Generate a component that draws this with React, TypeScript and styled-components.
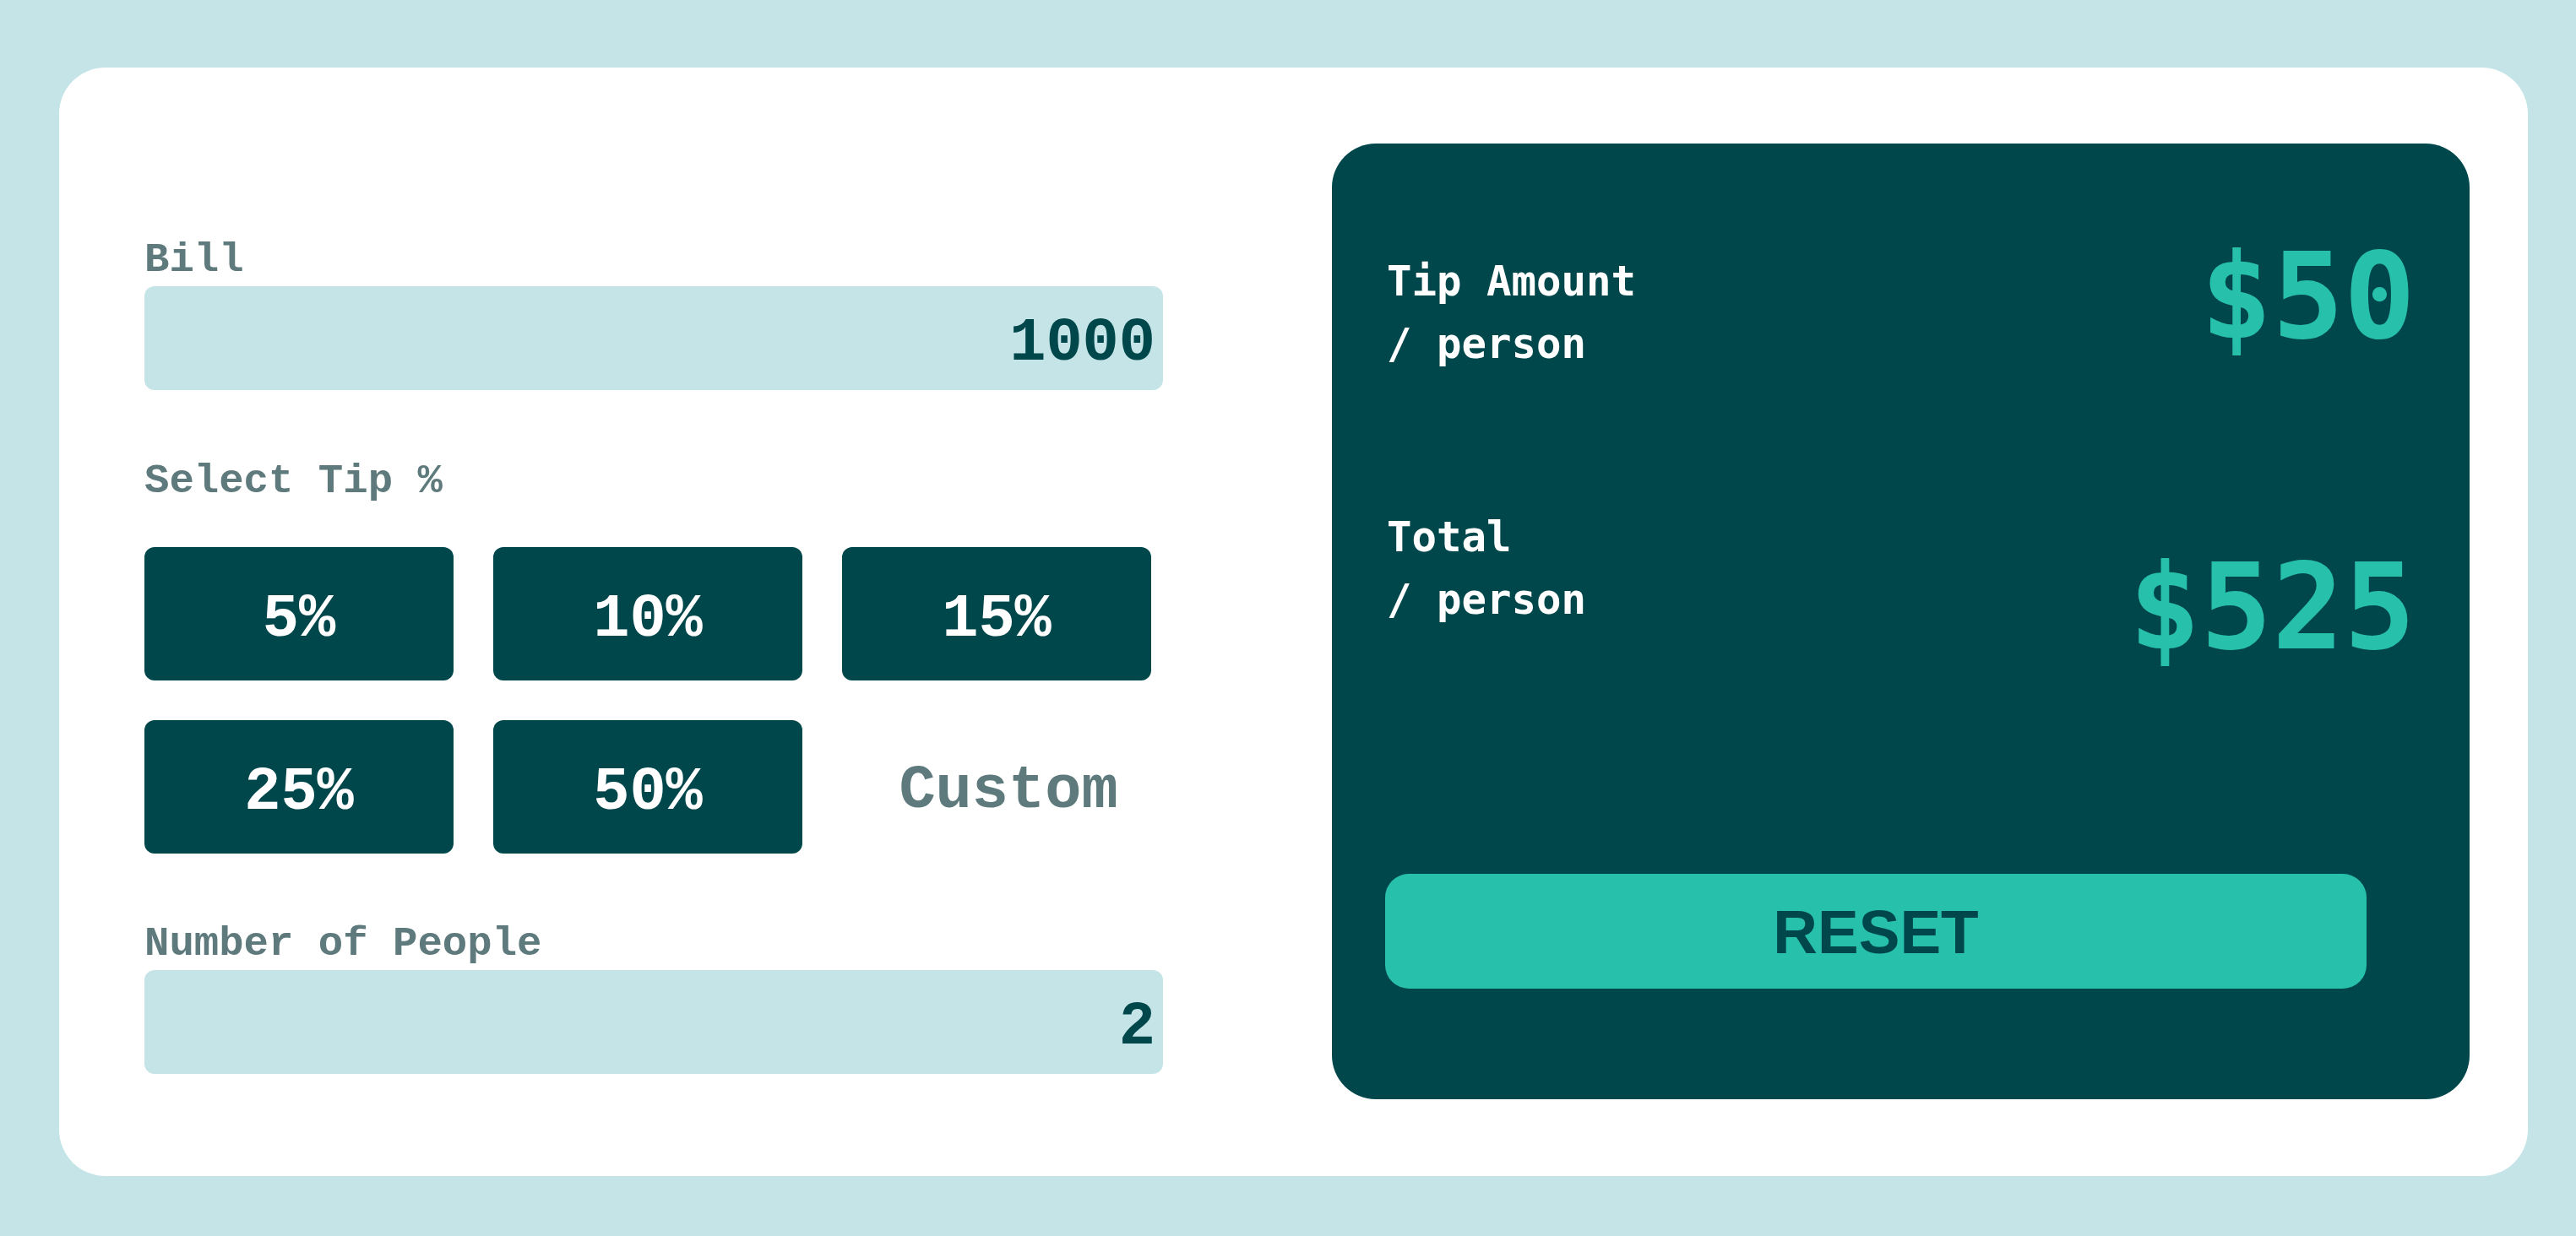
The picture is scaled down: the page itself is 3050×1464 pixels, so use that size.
import React from "react";
import styled, { createGlobalStyle } from "styled-components";

const GlobalStyle = createGlobalStyle`
  html, body {
    margin: 0;
    padding: 0;
    background: #c5e4e7;
  }
  body {
    font-family: "Liberation Mono", monospace;
  }
  * {
    box-sizing: border-box;
  }
`;

const Page = styled.div`
  min-height: 1464px;
  padding: 80px 57px 71px 70px;
  background: #c5e4e7;
`;

const Card = styled.main`
  display: flex;
  justify-content: space-between;
  align-items: flex-start;
  height: 1313px;
  padding: 90px 69px 91px 101px;
  background: #ffffff;
  border-radius: 55px;
`;

const Form = styled.section`
  display: flex;
  flex-direction: column;
  width: 1206px;
  padding-top: 114px;
`;

const Label = styled.label<{ $top?: number; $bottom?: number }>`
  display: block;
  margin-top: ${(p) => p.$top ?? 0}px;
  margin-bottom: ${(p) => p.$bottom ?? 6}px;
  font-family: "Liberation Mono", monospace;
  font-weight: 700;
  font-size: 49px;
  line-height: 49px;
  color: #5e7a7d;
`;

const NumberInput = styled.input`
  display: block;
  width: 100%;
  height: 123px;
  padding: 12px 9px 0 20px;
  border: none;
  border-radius: 12px;
  background: #c5e4e7;
  outline: none;
  text-align: right;
  font-family: "Liberation Mono", monospace;
  font-weight: 700;
  font-size: 72px;
  color: #00474b;
`;

const TipGrid = styled.div`
  display: grid;
  grid-template-columns: repeat(3, 366px);
  grid-auto-rows: 158px;
  column-gap: 47px;
  row-gap: 47px;
`;

const TipButton = styled.button`
  display: flex;
  align-items: center;
  justify-content: center;
  padding: 14px 0 0;
  border: none;
  border-radius: 12px;
  background: #00474b;
  color: #ffffff;
  font-family: "Liberation Mono", monospace;
  font-weight: 700;
  font-size: 72px;
  cursor: pointer;
`;

const CustomInput = styled.input`
  width: 100%;
  height: 100%;
  padding: 10px 0 0 28px;
  border: none;
  border-radius: 12px;
  background: transparent;
  outline: none;
  text-align: center;
  font-family: "Liberation Mono", monospace;
  font-weight: 700;
  font-size: 72px;
  color: #00474b;

  &::placeholder {
    color: #5e7a7d;
    opacity: 1;
  }
`;

const Panel = styled.section`
  display: flex;
  flex-direction: column;
  width: 1347px;
  height: 1132px;
  padding: 111px 64px 131px 65px;
  background: #00474b;
  border-radius: 52px;
`;

const ResultRow = styled.div<{ $top: number }>`
  display: flex;
  justify-content: space-between;
  align-items: flex-start;
  margin-top: ${(p) => p.$top}px;
`;

const ResultLabel = styled.div<{ $offset: number }>`
  margin-top: ${(p) => p.$offset}px;
  font-family: "DejaVu Sans Mono", monospace;
  font-weight: 700;
  font-size: 49px;
  line-height: 74px;
  color: #ffffff;

  span {
    display: block;
  }
`;

const Amount = styled.div<{ $offset: number }>`
  margin-top: ${(p) => p.$offset}px;
  font-family: "DejaVu Sans Mono", monospace;
  font-weight: 700;
  font-size: 141px;
  line-height: 140px;
  color: #26c0ab;
`;

const ResetButton = styled.button`
  margin-top: auto;
  margin-left: -2px;
  width: 1162px;
  height: 136px;
  border: none;
  border-radius: 28px;
  background: #26c0ab;
  color: #00474b;
  font-family: "Liberation Sans", Arial, sans-serif;
  font-weight: 700;
  font-size: 73px;
  cursor: pointer;
`;

const tips = ["5%", "10%", "15%", "25%", "50%"];

export default function App() {
  return (
    <>
      <GlobalStyle />
      <Page>
        <Card>
          <Form>
            <Label htmlFor="bill">Bill</Label>
            <NumberInput id="bill" type="text" readOnly value="1000" />

            <Label $top={84} $bottom={53}>
              Select Tip %
            </Label>
            <TipGrid>
              {tips.map((t) => (
                <TipButton key={t} type="button">
                  {t}
                </TipButton>
              ))}
              <CustomInput type="text" placeholder="Custom" />
            </TipGrid>

            <Label htmlFor="people" $top={83}>
              Number of People
            </Label>
            <NumberInput id="people" type="text" readOnly value="2" />
          </Form>

          <Panel>
            <ResultRow $top={0}>
              <ResultLabel $offset={16}>
                <span>Tip Amount</span>
                <span>/ person</span>
              </ResultLabel>
              <Amount $offset={0}>$50</Amount>
            </ResultRow>
            <ResultRow $top={155}>
              <ResultLabel $offset={0}>
                <span>Total</span>
                <span>/ person</span>
              </ResultLabel>
              <Amount $offset={49}>$525</Amount>
            </ResultRow>
            <ResetButton type="button">RESET</ResetButton>
          </Panel>
        </Card>
      </Page>
    </>
  );
}
